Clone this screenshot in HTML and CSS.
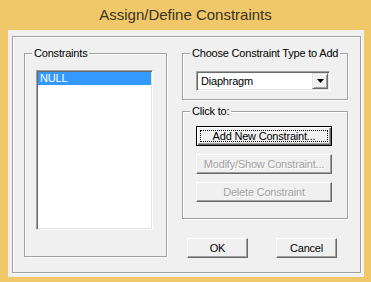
FILE: index.html
```html
<!DOCTYPE html>
<html lang="en">
<head>
  <meta charset="UTF-8">
  <title>Assign/Define Constraints</title>
  <link rel="stylesheet" href="styles.css">
</head>
<body>
  <div class="window">
    <div class="titlebar">Assign/Define Constraints</div>
    <div class="client">
      <div class="frame">
        <div class="group list-group">
          <span class="legend">Constraints</span>
          <div class="listbox">
            <div class="item selected">NULL</div>
          </div>
        </div>
        <div class="right-col">
          <div class="group type-group">
            <span class="legend">Choose Constraint Type to Add</span>
            <div class="combo">
              <span class="combo-text">Diaphragm</span>
              <span class="combo-btn">
                <svg width="7" height="4" viewBox="0 0 7 4"><path d="M0 0h7L3.5 4z" fill="#000"/></svg>
              </span>
            </div>
          </div>
          <div class="group click-group">
            <span class="legend">Click to:</span>
            <button class="btn btn-default"><span class="focus">Add New Constraint...</span></button>
            <button class="btn" disabled>Modify/Show Constraint...</button>
            <button class="btn" disabled>Delete Constraint</button>
          </div>
          <div class="actions">
            <button class="btn btn-small">OK</button>
            <button class="btn btn-small">Cancel</button>
          </div>
        </div>
      </div>
    </div>
  </div>
</body>
</html>
```

FILE: styles.css
```css
body {
  margin: 0;
  font-family: 'Liberation Sans', Arial, sans-serif;
}
.window {
  width: 371px;
  height: 282px;
  background: #f0c86a;
  display: flex;
  flex-direction: column;
}
.titlebar {
  height: 30px;
  line-height: 30px;
  text-align: center;
  font-size: 15px;
  color: #3a3222;
}
.client {
  flex: 1;
  margin: 0 7px 5px 8px;
  background: #f0f0f0;
  padding: 6px 3px 4px 4px;
  display: flex;
}
.frame {
  flex: 1;
  border: 1px solid #a0a0a0;
  box-shadow: inset 1px 1px #fff, 1px 1px #fff;
  padding: 16px 11px 0 11px;
  display: flex;
  gap: 15px;
}
.group {
  position: relative;
  box-sizing: border-box;
  border: 1px solid #a0a0a0;
  box-shadow: inset 1px 1px #fff, 1px 1px #fff;
  font-size: 11px;
  letter-spacing: -0.2px;
  color: #000;
}
.legend {
  position: absolute;
  top: -7px;
  left: 7px;
  padding: 0 2px;
  background: #f0f0f0;
  line-height: 13px;
}
.list-group {
  width: 143px;
  height: 204px;
  padding: 16px 0 0 11px;
}
.listbox {
  box-sizing: border-box;
  width: 117px;
  height: 160px;
  background: #fff;
  border: 1px solid;
  border-color: #a0a0a0 #fff #fff #a0a0a0;
  box-shadow: inset 1px 1px #696969, inset -1px -1px #e3e3e3;
  padding: 1px;
}
.item {
  height: 13px;
  line-height: 13px;
  padding-left: 2px;
}
.item.selected {
  background: #3399ff;
  color: #fff;
}
.right-col {
  width: 166px;
  display: flex;
  flex-direction: column;
}
.type-group {
  height: 47px;
  padding: 17px 0 0 13px;
}
.combo {
  box-sizing: border-box;
  width: 134px;
  height: 20px;
  display: flex;
  align-items: center;
  background: #fff;
  border: 1px solid;
  border-color: #a0a0a0 #fff #fff #a0a0a0;
  box-shadow: inset 1px 1px #696969, inset -1px -1px #e3e3e3;
  padding: 1px;
}
.combo-text {
  flex: 1;
  padding-left: 3px;
}
.combo-btn {
  box-sizing: border-box;
  width: 16px;
  height: 16px;
  display: flex;
  align-items: center;
  justify-content: center;
  background: #f0f0f0;
  border: 1px solid;
  border-color: #e3e3e3 #696969 #696969 #e3e3e3;
  box-shadow: inset 1px 1px #fff, inset -1px -1px #a0a0a0;
}
.click-group {
  margin-top: 11px;
  height: 108px;
  padding: 14px 0 0 13px;
  display: flex;
  flex-direction: column;
  gap: 8px;
}
.btn {
  box-sizing: border-box;
  width: 136px;
  height: 20px;
  padding: 0;
  background: #f0f0f0;
  border: 1px solid;
  border-color: #fff #696969 #696969 #fff;
  box-shadow: inset -1px -1px #a0a0a0;
  font-family: inherit;
  font-size: 11px;
  letter-spacing: -0.2px;
  color: #000;
}
.btn:disabled {
  color: #a0a0a0;
  text-shadow: 1px 1px #fff;
}
.btn-default {
  border-color: #000;
  box-shadow: inset 1px 1px #fff, inset -1px -1px #696969, inset -2px -2px #a0a0a0;
  padding: 3px;
}
.focus {
  display: block;
  height: 100%;
  box-sizing: border-box;
  border: 1px dotted #000;
  line-height: 10px;
}
.actions {
  margin-top: 19px;
  padding-left: 5px;
  display: flex;
  gap: 28px;
}
.btn-small {
  width: 61px;
}
```
